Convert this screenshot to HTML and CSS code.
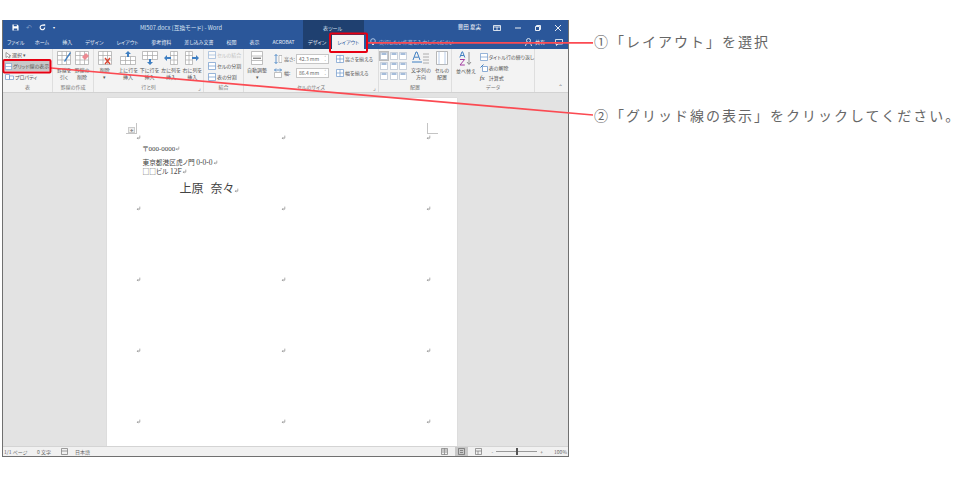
FILE: index.html
```html
<!DOCTYPE html>
<html lang="ja">
<head>
    <meta charset="UTF-8">
    <title>グリッド線の表示</title>
    <link rel="stylesheet" href="styles.css">
</head>
<body>
<svg width="0" height="0" class="defs">
    <symbol id="grid" viewBox="0 0 14 14"><path d="M.5.5h13v13H.5zM.5 4.5h13M.5 9h13M5 .5v13M9.500 .5v13" fill="#fff" stroke="#a6a6a6" stroke-width=".7"/></symbol>
    <symbol id="cell" viewBox="0 0 8 8"><path d="M.5.5h7v7h-7zM.5 4h7" fill="#fff" stroke="#6f98cb" stroke-width=".7"/></symbol>
    <symbol id="align" viewBox="0 0 8 8"><path d="M.5.5h7v7h-7z" fill="#fff" stroke="#a8b5c8" stroke-width=".6"/><path d="M1.500 2h5" stroke="#4d7bb5" stroke-width="1"/></symbol>
    <symbol id="ret" viewBox="0 0 5 5"><path d="M3.800.6v2.600H1.200M2.200 2.200l-1 1 1 1" fill="none" stroke="#777" stroke-width=".6"/></symbol>
</svg>
<div class="page">
    <div class="window">
        <div class="titlebar">
            <div class="qat">
                <svg width="7" height="7" viewBox="0 0 8 8"><path d="M.5.500h5.500l1.500 1.500v5.500h-7z" fill="#fff"/><path d="M2 .5h3.500v2H2zM2 5h4v2.500H2z" fill="#2b579a"/></svg>
                <span class="qat-dim">↶</span>
                <svg width="7" height="7" viewBox="0 0 8 8"><path d="M6.500 4a2.600 2.600 0 1 1-1-2.100" fill="none" stroke="#fff" stroke-width="1.300"/><path d="M4.500.2h2.600v2.600z" fill="#fff"/></svg>
                <span class="qat-more">▾</span>
            </div>
            <div class="doc-title">MI507.docx [互換モード] - Word</div>
            <div class="tool-head">表ツール</div>
            <div class="win-controls">
                <span class="user">豊田 夏実</span>
                <svg width="8" height="6" viewBox="0 0 8 6"><path d="M.5.500h7v5h-7zM.5 2h7M4 2v3.500" fill="none" stroke="#fff" stroke-width=".8"/></svg>
                <svg width="6" height="6" viewBox="0 0 6 6"><path d="M0 3h6" stroke="#fff" stroke-width=".9"/></svg>
                <svg width="6" height="6" viewBox="0 0 6 6"><path d="M.5 1.500h4v4h-4zM1.500 1.500v-1h4v4h-1" fill="none" stroke="#fff" stroke-width=".9"/></svg>
                <svg width="6" height="6" viewBox="0 0 6 6"><path d="M0 0l6 6M6 0l-6 6" stroke="#fff" stroke-width=".9"/></svg>
            </div>
        </div>
        <div class="tabs">
            <div class="tab-list">
                <span class="tab tab-file">ファイル</span>
                <span class="tab">ホーム</span>
                <span class="tab">挿入</span>
                <span class="tab">デザイン</span>
                <span class="tab">レイアウト</span>
                <span class="tab">参考資料</span>
                <span class="tab">差し込み文書</span>
                <span class="tab">校閲</span>
                <span class="tab">表示</span>
                <span class="tab">ACROBAT</span>
            </div>
            <div class="tab-context">
                <span class="tab">デザイン</span>
                <span class="tab tab-active">レイアウト</span>
            </div>
            <div class="tell-me">
                <svg width="6" height="8" viewBox="0 0 6 8"><circle cx="3" cy="3" r="2.300" fill="none" stroke="#cfe0f5" stroke-width=".8"/><path d="M2 6.500h2" stroke="#cfe0f5"/></svg>
                実行したい作業を入力してください
            </div>
            <div class="share">
                <svg width="7" height="8" viewBox="0 0 7 8"><circle cx="3.500" cy="2.500" r="2" fill="none" stroke="#fff" stroke-width=".8"/><path d="M.5 8c0-4 6-4 6 0" fill="none" stroke="#fff" stroke-width=".8"/></svg>
                <span>共有</span>
                <svg class="comment" width="8" height="7" viewBox="0 0 8 7"><path d="M.5.500h7v4.500H3L1.500 6.500V5h-1z" fill="none" stroke="#fff" stroke-width=".8"/></svg>
            </div>
        </div>
        <div class="ribbon">
            <section class="group g-table">
                <div class="group-body rows">
                    <div class="row-btn"><svg width="6" height="7" viewBox="0 0 6 7"><path d="M1 .5v5l1.500-1.200L4 6l1-.5-1-1.600h1.800z" fill="#fff" stroke="#666" stroke-width=".6"/></svg>選択 ▾</div>
                    <div class="row-btn row-on"><svg width="7" height="7"><use href="#cell"/></svg>グリッド線の表示</div>
                    <div class="row-btn"><svg width="9" height="6" viewBox="0 0 9 6"><path d="M.5.500h4v5h-4zM4.500 2h4v3.500h-4z" fill="#fff" stroke="#6f98cb" stroke-width=".7"/></svg>プロパティ</div>
                </div>
                <div class="group-label">表</div>
            </section>
            <section class="group g-draw">
                <div class="group-body bigs">
                    <div class="big"><svg width="14" height="14" viewBox="0 0 14 14"><use href="#grid" width="14" height="14"/><path d="M7 10L13 1l1 1-6 9z" fill="#3f7fc2"/></svg><span>罫線を<br>引く</span></div>
                    <div class="big"><svg width="14" height="14" viewBox="0 0 14 14"><use href="#grid" width="14" height="14"/><path d="M7 6l4-4 3 3-4 4z" fill="#ec8a92"/></svg><span>罫線の<br>削除</span></div>
                </div>
                <div class="group-label">罫線の作成</div>
            </section>
            <section class="group g-rows">
                <div class="group-body bigs">
                    <div class="big big-del"><svg width="14" height="14" viewBox="0 0 14 14"><use href="#grid" width="14" height="14"/><path d="M7 7l5 6M12 7l-5 6" stroke="#d9432f" stroke-width="1.300"/></svg><span>削除<br>▾</span></div>
                    <div class="big"><svg width="16" height="14" viewBox="0 0 16 14"><path d="M.5 5.500h15v8H.5zM.5 9.500h15M5.500 5.500v8M10.500 5.500v8" fill="#fff" stroke="#a6a6a6" stroke-width=".7"/><path d="M8 0l3 3H9v3H7V3H5z" fill="#3f7fc2"/></svg><span>上に行を<br>挿入</span></div>
                    <div class="big"><svg width="16" height="14" viewBox="0 0 16 14"><path d="M.5.500h15v8H.5zM.5 4.500h15M5.500.5v8M10.500.5v8" fill="#fff" stroke="#a6a6a6" stroke-width=".7"/><path d="M8 14l3-3H9V8H7v3H5z" fill="#3f7fc2"/></svg><span>下に行を<br>挿入</span></div>
                    <div class="big"><svg width="14" height="14" viewBox="0 0 14 14"><path d="M6.500.5h7v13h-7zM6.500 4.500h7M6.500 9h7M10 .5v13" fill="#fff" stroke="#a6a6a6" stroke-width=".7"/><path d="M0 7l3-3v2h4v2H3v2z" fill="#3f7fc2"/></svg><span>左に列を<br>挿入</span></div>
                    <div class="big"><svg width="14" height="14" viewBox="0 0 14 14"><path d="M.5.500h7v13h-7zM.5 4.500h7M.5 9h7M4 .5v13" fill="#fff" stroke="#a6a6a6" stroke-width=".7"/><path d="M14 7l-3-3v2H7v2h4v2z" fill="#3f7fc2"/></svg><span>右に列を<br>挿入</span></div>
                </div>
                <div class="group-label">行と列</div>
                <span class="launcher">⌟</span>
            </section>
            <section class="group g-merge">
                <div class="group-body rows">
                    <div class="row-btn row-off"><svg width="8" height="8"><use href="#cell"/></svg>セルの結合</div>
                    <div class="row-btn"><svg width="8" height="8"><use href="#cell"/></svg>セルの分割</div>
                    <div class="row-btn"><svg width="8" height="8"><use href="#cell"/></svg>表の分割</div>
                </div>
                <div class="group-label">結合</div>
            </section>
            <section class="group g-size">
                <div class="group-body size-body">
                    <div class="big big-auto"><svg width="14" height="14" viewBox="0 0 14 14"><path d="M1.500.5h11v13h-11zM1.500 5h11M1.500 9.500h11" fill="#fff" stroke="#a6a6a6" stroke-width=".7"/><path d="M3 7.200h8" stroke="#555" stroke-width="1"/></svg><span>自動調整<br>▾</span></div>
                    <div class="size-rows">
                        <div class="size-row">
                            <svg width="8" height="10" viewBox="0 0 8 10"><path d="M2 .5v9M.5 2L2 .5 3.500 2M.5 8L2 9.500 3.500 8" fill="none" stroke="#3f7fc2" stroke-width=".8"/><path d="M5 1.500h3v7H5z" fill="#fff" stroke="#999" stroke-width=".6"/></svg>
                            <span class="size-name">高さ:</span>
                            <span class="spin">42.3 mm<i>⌃<br>⌄</i></span>
                            <svg width="8" height="8" viewBox="0 0 8 8"><path d="M.5.500h7v7h-7zM.5 4h7M4 .5v7" fill="#fff" stroke="#6f98cb" stroke-width=".7"/></svg>
                            <span class="size-fit">高さを揃える</span>
                        </div>
                        <div class="size-row">
                            <svg width="8" height="10" viewBox="0 0 8 10"><path d="M.5 4.500h7v5h-7z" fill="#fff" stroke="#999" stroke-width=".6"/><path d="M.5 2h7M2 .5L.5 2 2 3.500M6 .5L7.500 2 6 3.500" fill="none" stroke="#3f7fc2" stroke-width=".8"/></svg>
                            <span class="size-name">幅:</span>
                            <span class="spin">86.4 mm<i>⌃<br>⌄</i></span>
                            <svg width="8" height="8" viewBox="0 0 8 8"><path d="M.5.500h7v7h-7zM.5 4h7M4 .5v7" fill="#fff" stroke="#6f98cb" stroke-width=".7"/></svg>
                            <span class="size-fit">幅を揃える</span>
                        </div>
                    </div>
                </div>
                <div class="group-label">セルのサイズ</div>
                <span class="launcher">⌟</span>
            </section>
            <section class="group g-align">
                <div class="group-body align-body">
                    <div class="align-grid">
                        <svg class="align-on" width="8" height="8"><use href="#align"/></svg>
                        <svg width="8" height="8"><use href="#align"/></svg>
                        <svg width="8" height="8"><use href="#align"/></svg>
                        <svg width="8" height="8"><use href="#align"/></svg>
                        <svg width="8" height="8"><use href="#align"/></svg>
                        <svg width="8" height="8"><use href="#align"/></svg>
                        <svg width="8" height="8"><use href="#align"/></svg>
                        <svg width="8" height="8"><use href="#align"/></svg>
                        <svg width="8" height="8"><use href="#align"/></svg>
                    </div>
                    <div class="big"><svg width="17" height="14" viewBox="0 0 17 14"><path d="M1 9l3-8h1l3 8M2.300 6.200h4.400" fill="none" stroke="#3f7fc2" stroke-width="1"/><path d="M0 11h10" stroke="#3f7fc2" stroke-width="1"/><path d="M11 3h6M11 6h6M11 9h6M11 12h6" stroke="#999" stroke-width=".8"/></svg><span>文字列の<br>方向</span></div>
                    <div class="big"><svg width="12" height="14" viewBox="0 0 12 14"><path d="M.5.500h11v13H.5z" fill="#fff" stroke="#a6a6a6" stroke-width=".8"/><path d="M3 .5v13M9 .5v13" stroke="#a9c2e3" stroke-width=".8"/></svg><span>セルの<br>配置</span></div>
                </div>
                <div class="group-label">配置</div>
            </section>
            <section class="group g-data">
                <div class="group-body data-body">
                    <div class="big"><svg width="13" height="15" viewBox="0 0 13 15"><path d="M.8 6.500L3 .8h.6l2.200 5.700M1.700 4.500h3.200" fill="none" stroke="#3f7fc2" stroke-width="1"/><path d="M1 8.500h4.600L1 14h4.800" fill="none" stroke="#a23aa0" stroke-width="1"/><path d="M10 1v12M8 11l2 2.500 2-2.500" fill="none" stroke="#888" stroke-width=".9"/></svg><span>並べ替え</span></div>
                    <div class="rows">
                        <div class="row-btn"><svg width="8" height="8"><use href="#cell"/></svg>タイトル行の繰り返し</div>
                        <div class="row-btn"><svg width="8" height="8" viewBox="0 0 8 8"><path d="M2.500 2.500h5v5h-5z" fill="#fff" stroke="#6f98cb" stroke-width=".8"/><path d="M.5 3.500l3-3" stroke="#3f7fc2"/></svg>表の解除</div>
                        <div class="row-btn"><i class="fx">fx</i>計算式</div>
                    </div>
                </div>
                <div class="group-label">データ</div>
            </section>
            <span class="collapse">⌃</span>
        </div>
        <div class="workspace">
            <div class="doc">
                <span class="crop crop-left"></span>
                <span class="handle">✛</span>
                <span class="crop crop-right"></span>
                <div class="label-grid">
                    <div class="cell">
                        <svg class="mark"><use href="#ret"/></svg>
                        <div class="address">
                            <p class="zip">〒000-0000<svg class="mark"><use href="#ret"/></svg></p>
                            <p>東京都港区虎ノ門 <span class="num">0-0-0</span><svg class="mark"><use href="#ret"/></svg></p>
                            <p><span class="boxes">□□</span>ビル <span class="num">12F</span><svg class="mark"><use href="#ret"/></svg></p>
                            <p class="name">上原 奈々<svg class="mark"><use href="#ret"/></svg></p>
                        </div>
                    </div>
                    <div class="cell"><svg class="mark"><use href="#ret"/></svg></div>
                    <div class="cell"><svg class="mark"><use href="#ret"/></svg></div>
                    <div class="cell"><svg class="mark"><use href="#ret"/></svg></div>
                    <div class="cell"><svg class="mark"><use href="#ret"/></svg></div>
                    <div class="cell"><svg class="mark"><use href="#ret"/></svg></div>
                    <div class="cell"><svg class="mark"><use href="#ret"/></svg></div>
                    <div class="cell"><svg class="mark"><use href="#ret"/></svg></div>
                    <div class="cell"><svg class="mark"><use href="#ret"/></svg></div>
                    <div class="cell"><svg class="mark"><use href="#ret"/></svg></div>
                    <div class="cell"><svg class="mark"><use href="#ret"/></svg></div>
                    <div class="cell"><svg class="mark"><use href="#ret"/></svg></div>
                    <div class="cell"><svg class="mark"><use href="#ret"/></svg></div>
                    <div class="cell"><svg class="mark"><use href="#ret"/></svg></div>
                    <div class="cell"><svg class="mark"><use href="#ret"/></svg></div>
                </div>
            </div>
        </div>
        <div class="statusbar">
            <span class="st-page">1/1 ページ</span>
            <span class="st-words">0 文字</span>
            <svg class="st-check" width="7" height="7" viewBox="0 0 7 7"><path d="M.5.500h6v6h-6zM.5 3h6" fill="none" stroke="#777" stroke-width=".7"/></svg>
            <span>日本語</span>
            <div class="st-right">
                <svg width="7" height="7" viewBox="0 0 7 7"><path d="M.5.500h6v6h-6zM3.500.5v6M1 2h2M1 4h2M4 2h2M4 4h2" fill="none" stroke="#777" stroke-width=".7"/></svg>
                <span class="view-on"><svg width="7" height="7" viewBox="0 0 7 7"><path d="M.5.500h6v6h-6zM2 2.500h3M2 4.500h3" fill="none" stroke="#666" stroke-width=".7"/></svg></span>
                <svg width="7" height="7" viewBox="0 0 7 7"><path d="M.5.500h6v6h-6zM.5 3h6M3 3v3.500" fill="none" stroke="#777" stroke-width=".7"/></svg>
                <div class="zoom">
                    <span>-</span>
                    <span class="zoom-slider"><i class="thumb"></i></span>
                    <span>+</span>
                </div>
                <span class="zoom-value">100%</span>
            </div>
        </div>
    </div>
    <aside class="notes">
        <p>①「レイアウト」を選択</p>
        <p>②「グリッド線の表示」をクリックしてください。</p>
    </aside>
    <svg class="overlay" width="970" height="480" viewBox="0 0 970 480">
        <path class="leader" d="M367 42.800H593"/>
        <path class="leader" d="M51 68L593 115"/>
        <rect class="red-box" x="3.500" y="60" width="47" height="12.500" rx="1"/>
        <rect class="red-box" x="330" y="33.500" width="37" height="18.500" rx="1"/>
    </svg>
</div>
</body>
</html>
```

FILE: styles.css
```css
* {
    box-sizing: border-box;
}
html, body {
    margin: 0;
    height: 100%;
    background-color: #fff;
}
body {
    font-family: "Noto Sans CJK JP", "Noto Sans", sans-serif;
    font-size: 5px;
    line-height: 1.2;
    color: #555;
    font-feature-settings: "palt";
}
p {
    margin: 0;
}
.defs {
    position: absolute;
}
.page {
    position: relative;
    display: flex;
    width: 970px;
    height: 480px;
    padding: 20px 0 0 2px;
}
.overlay {
    position: absolute;
    left: 0;
    top: 0;
}
.leader {
    fill: none;
    stroke: #fb4a52;
    stroke-width: 1.700;
}
.red-box {
    fill: none;
    stroke: #e60012;
    stroke-width: 2;
}

/* window */
.window {
    display: flex;
    flex-direction: column;
    width: 567px;
    height: 437px;
    border: 1px solid #707070;
    border-top: 0;
}
.titlebar {
    display: flex;
    align-items: stretch;
    height: 15px;
    background-color: #2b579a;
    color: #d6e1f0;
}
.qat {
    display: flex;
    align-items: center;
    gap: 7px;
    width: 56px;
    padding-left: 9px;
    color: #fff;
}
.qat-dim {
    color: #7e9ac4;
    font-size: 7px;
}
.qat-more {
    font-size: 4px;
}
.doc-title {
    width: 244px;
    text-align: center;
    line-height: 15px;
    font-size: 5.800px;
}
.tool-head {
    width: 61px;
    padding-left: 20px;
    line-height: 15px;
    background-color: #1f4070;
}
.win-controls {
    display: flex;
    flex: 1;
    align-items: center;
    justify-content: flex-end;
    gap: 14px;
    padding-right: 7px;
    color: #fff;
}
.user {
    margin-right: -2px;
    font-size: 5.500px;
}
.tabs {
    display: flex;
    align-items: stretch;
    height: 14px;
    background-color: #2b579a;
    color: #e6edf7;
}
.tab-list {
    display: flex;
    width: 300px;
}
.tab {
    padding: 0 6.500px;
    line-height: 14px;
    white-space: nowrap;
}
.tab-file {
    padding: 0 4px;
}
.tab-context {
    display: flex;
    width: 61px;
    background-color: #1f4070;
}
.tab-context .tab {
    padding: 0 6px 0 5px;
}
.tab-context .tab-active {
    flex: 1;
    padding: 0;
    text-align: center;
    background-color: #f3f3f3;
    color: #2b579a;
}
.tell-me {
    display: flex;
    align-items: center;
    gap: 3px;
    width: 150px;
    padding-left: 6px;
    color: #a9bfe0;
}
.share {
    display: flex;
    flex: 1;
    align-items: center;
    justify-content: flex-end;
    gap: 3px;
    padding-right: 5px;
    color: #fff;
}
.comment {
    margin-left: 7px;
}

/* ribbon */
.ribbon {
    position: relative;
    display: flex;
    height: 44px;
    background-color: #f3f3f3;
    border-bottom: 1px solid #d2d2d2;
}
.group {
    position: relative;
    display: flex;
    flex-direction: column;
    border-right: 1px solid #dedede;
}
.group-body {
    height: 34px;
    padding-top: 2px;
}
.group-label {
    text-align: center;
    color: #777;
    line-height: 8px;
}
.g-table { width: 50px; }
.g-draw { width: 41px; }
.g-rows { width: 110px; }
.g-merge { width: 40px; }
.g-size { width: 135px; }
.g-align { width: 73px; }
.g-data { width: 83px; }
.rows {
    display: flex;
    flex-direction: column;
    gap: 1px;
    padding-left: 2px;
    padding-top: 1px;
}
.row-btn {
    display: flex;
    align-items: center;
    gap: 1px;
    height: 10px;
    white-space: nowrap;
}
.row-on {
    width: 45px;
    background-color: #c8c8c8;
}
.row-off {
    color: #adadad;
    opacity: .7;
}
.bigs {
    display: flex;
    justify-content: space-around;
    padding-left: 2px;
    padding-right: 2px;
}
.big {
    display: flex;
    flex-direction: column;
    align-items: center;
    gap: 2px;
    text-align: center;
    white-space: nowrap;
    line-height: 6.500px;
}
.launcher {
    position: absolute;
    right: 2px;
    bottom: 1px;
    font-size: 6px;
    color: #888;
}

.g-rows .bigs {
    justify-content: flex-start;
    padding: 2px 0 0 0;
}
.g-rows .big {
    width: 21.500px;
}
.g-rows .big-del {
    margin-right: 2px;
}
.g-merge .rows {
    padding-left: 4px;
}
.size-body {
    display: flex;
    gap: 7px;
    padding-left: 3px;
}
.size-rows {
    display: flex;
    flex-direction: column;
    gap: 4px;
    padding-top: 3px;
}
.size-row {
    display: flex;
    align-items: center;
    gap: 2px;
    height: 10px;
    white-space: nowrap;
}
.size-name {
    width: 10px;
}
.size-fit {
    margin-left: -1px;
}
.spin {
    display: flex;
    align-items: center;
    justify-content: space-between;
    width: 33px;
    height: 10px;
    margin-right: 5px;
    padding: 0 1px 0 2px;
    background-color: #fff;
    border: 1px solid #c6c6c6;
    color: #666;
}
.spin i {
    font-style: normal;
    font-size: 3px;
    line-height: 3px;
}
.align-body {
    display: flex;
    gap: 4px;
    padding-left: 1px;
}
.align-grid {
    display: grid;
    grid-template-columns: repeat(3, 8px);
    grid-auto-rows: 8px;
    gap: 2px 1.500px;
    align-content: start;
    width: 27px;
    padding-top: 1px;
}
.align-on {
    background-color: #c8c8c8;
    outline: 1px solid #bbb;
}
.data-body {
    display: flex;
    gap: 2px;
    padding-left: 4px;
}
.fx {
    width: 8px;
    font-family: "Liberation Serif", serif;
    font-size: 7px;
    color: #444;
}
.collapse {
    position: absolute;
    right: 5px;
    bottom: 2px;
    font-size: 6px;
    color: #777;
}

/* document */
.workspace {
    flex: 1;
    min-height: 0;
    overflow: hidden;
    display: flex;
    justify-content: center;
    padding: 5px 0 0 0;
    background-color: #e3e3e3;
}
.doc {
    position: relative;
    flex: none;
    width: 350px;
    height: 600px;
    margin-right: 8px;
    padding: 37px 0 0 29px;
    background-color: #fff;
    box-shadow: 0 0 1px #c4c4c4;
    color: #444;
}
.crop {
    position: absolute;
    top: 25px;
    width: 11px;
    height: 11px;
    border-bottom: 1px solid #c4c4c4;
}
.crop-left {
    left: 19px;
    border-right: 1px solid #c4c4c4;
}
.crop-right {
    left: 320px;
    border-left: 1px solid #c4c4c4;
}
.handle {
    position: absolute;
    left: 21px;
    top: 29px;
    width: 7px;
    height: 6px;
    border: 1px solid #ccc;
    background-color: #eee;
    font-size: 4px;
    line-height: 4px;
    text-align: center;
}
.label-grid {
    display: grid;
    grid-template-columns: repeat(3, 145px);
    grid-auto-rows: 71px;
}
.mark {
    width: 5px;
    height: 5px;
}
.cell {
    line-height: 6px;
}
.address {
    padding: 4px 0 0 7px;
    font-family: "Liberation Serif", "Noto Sans CJK JP", serif;
    font-size: 6.700px;
    line-height: 9.500px;
    white-space: nowrap;
}
.num {
    font-size: 7.500px;
}
.boxes {
    font-family: "Noto Sans CJK JP", sans-serif;
}
.zip {
    margin-bottom: 3px;
    font-size: 7px;
}
.name {
    margin-top: 4px;
    padding-left: 37px;
    font-size: 12px;
    line-height: 16px;
    word-spacing: 4px;
}

/* status bar */
.statusbar {
    display: flex;
    align-items: center;
    height: 10px;
    padding-left: 1px;
    background-color: #f1f1f1;
    border-top: 1px solid #d4d4d4;
    color: #666;
}
.st-page {
    width: 33px;
}
.st-words {
    width: 24px;
}
.st-check {
    margin-right: 7px;
}
.st-right {
    display: flex;
    flex: 1;
    align-items: center;
    justify-content: flex-end;
    gap: 7px;
    padding-right: 1px;
}
.view-on {
    display: flex;
    align-items: center;
    justify-content: center;
    width: 13px;
    height: 9px;
    background-color: #c8c8c8;
}
.zoom {
    display: flex;
    align-items: center;
    gap: 3px;
    margin-left: 2px;
}
.zoom-slider {
    position: relative;
    width: 41px;
    height: 1px;
    background-color: #999;
}
.thumb {
    position: absolute;
    left: 20px;
    top: -3px;
    width: 2px;
    height: 7px;
    background-color: #555;
}
.zoom-value {
    width: 17px;
    text-align: right;
}

/* notes right of the window */
.notes {
    display: flex;
    flex-direction: column;
    gap: 52px;
    padding: 10px 0 0 25px;
    font-size: 14px;
    line-height: 22px;
    letter-spacing: 2px;
    color: #666;
    white-space: nowrap;
    font-feature-settings: normal;
}
```
